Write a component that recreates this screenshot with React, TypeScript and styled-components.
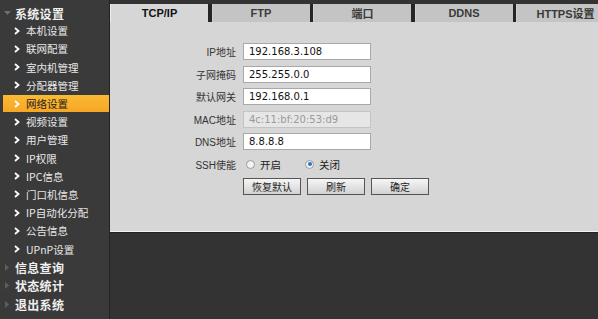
import React from 'react';
import styled, { createGlobalStyle } from 'styled-components';

const GlobalStyle = createGlobalStyle`
  html, body {
    margin: 0;
    padding: 0;
    background: #333333;
  }
  * {
    box-sizing: border-box;
  }
`;

type MenuItem = { label: string; active?: boolean };

const subItems: MenuItem[] = [
  { label: '本机设置' },
  { label: '联网配置' },
  { label: '室内机管理' },
  { label: '分配器管理' },
  { label: '网络设置', active: true },
  { label: '视频设置' },
  { label: '用户管理' },
  { label: 'IP权限' },
  { label: 'IPC信息' },
  { label: '门口机信息' },
  { label: 'IP自动化分配' },
  { label: '公告信息' },
  { label: 'UPnP设置' },
];

const otherGroups = ['信息查询', '状态统计', '退出系统'];

const tabs = ['TCP/IP', 'FTP', '端口', 'DDNS', 'HTTPS设置'];

const fields = [
  { label: 'IP地址', value: '192.168.3.108' },
  { label: '子网掩码', value: '255.255.0.0' },
  { label: '默认网关', value: '192.168.0.1' },
  { label: 'MAC地址', value: '4c:11:bf:20:53:d9', disabled: true },
  { label: 'DNS地址', value: '8.8.8.8' },
];

function Chevron() {
  return (
    <svg width="6" height="8" viewBox="0 0 6 8">
      <polyline points="1,1 4.5,4 1,7" fill="none" stroke="#ffffff" strokeWidth="1.8" />
    </svg>
  );
}

function Caret({ open }: { open?: boolean }) {
  return open ? (
    <svg width="7" height="6" viewBox="0 0 7 6">
      <polygon points="0,1 7,1 3.5,5" fill="#6e6e6e" />
    </svg>
  ) : (
    <svg width="6" height="7" viewBox="0 0 6 7">
      <polygon points="1,0 5,3.5 1,7" fill="#5e5e5e" />
    </svg>
  );
}

function App() {
  return (
    <>
      <GlobalStyle />
      <Page>
        <Sidebar>
          <GroupRow>
            <CaretBox>
              <Caret open />
            </CaretBox>
            <GroupLabel>系统设置</GroupLabel>
          </GroupRow>
          {subItems.map((item) => (
            <SubRow key={item.label} $active={item.active}>
              <ChevronBox>
                <Chevron />
              </ChevronBox>
              <SubLabel $active={item.active}>{item.label}</SubLabel>
            </SubRow>
          ))}
          {otherGroups.map((g) => (
            <GroupRow key={g}>
              <CaretBox>
                <Caret />
              </CaretBox>
              <GroupLabel>{g}</GroupLabel>
            </GroupRow>
          ))}
        </Sidebar>
        <Main>
          <TabBar>
            {tabs.map((t, i) => (
              <Tab key={t} $active={i === 0}>
                {t}
              </Tab>
            ))}
          </TabBar>
          <Panel>
            <Form>
              {fields.map((f) => (
                <React.Fragment key={f.label}>
                  <FieldLabel>{f.label}</FieldLabel>
                  <TextInput $disabled={f.disabled}>{f.value}</TextInput>
                </React.Fragment>
              ))}
              <FieldLabel>SSH使能</FieldLabel>
              <RadioGroup>
                <RadioOption $width={59}>
                  <Radio />
                  开启
                </RadioOption>
                <RadioOption $width={59}>
                  <Radio $checked />
                  关闭
                </RadioOption>
              </RadioGroup>
              <span />
              <ButtonRow>
                <Button>恢复默认</Button>
                <Button>刷新</Button>
                <Button>确定</Button>
              </ButtonRow>
            </Form>
          </Panel>
        </Main>
      </Page>
    </>
  );
}

const Page = styled.div`
  display: flex;
  width: 598px;
  height: 319px;
  overflow: hidden;
  background: #333333;
`;

const Sidebar = styled.div`
  width: 110px;
  flex-shrink: 0;
  padding: 4px 0 0 3px;
  background: #3a3a3a;
  border-right: 1px solid #232323;
  font-family: 'Noto Sans CJK SC', 'Liberation Sans', sans-serif;
`;

const GroupRow = styled.div`
  display: flex;
  align-items: center;
  height: 18.2px;
`;

const CaretBox = styled.div`
  display: flex;
  align-items: center;
  justify-content: center;
  width: 8px;
  margin-right: 4px;
`;

const GroupLabel = styled.span`
  font-size: 12px;
  font-weight: 700;
  color: #f0f0f0;
  letter-spacing: 0.3px;
`;

const SubRow = styled.div<{ $active?: boolean }>`
  display: flex;
  align-items: center;
  height: 18.2px;
  padding-bottom: 1px;
  background: ${(p) => (p.$active ? 'linear-gradient(#fbb934, #f5a623)' : 'transparent')};
  background-clip: content-box;
`;

const ChevronBox = styled.div`
  display: flex;
  align-items: center;
  width: 23px;
  padding-left: 11px;
`;

const SubLabel = styled.span<{ $active?: boolean }>`
  font-size: 10.5px;
  color: ${(p) => (p.$active ? '#222222' : '#e8e8e8')};
`;

const Main = styled.div`
  flex: 1;
  display: flex;
  flex-direction: column;
  padding-top: 4px;
  min-width: 0;
`;

const TabBar = styled.div`
  display: flex;
  gap: 3.5px;
  height: 18px;
  background: #252525;
  overflow: hidden;
`;

const Tab = styled.div<{ $active?: boolean }>`
  flex: 0 0 98px;
  display: flex;
  align-items: center;
  justify-content: center;
  background: ${(p) => (p.$active ? '#d6d6d6' : '#c4c4c4')};
  border-left: 1px solid ${(p) => (p.$active ? '#ececec' : '#cfcfcf')};
  font-family: 'Liberation Sans', 'Noto Sans CJK SC', sans-serif;
  font-size: 11px;
  font-weight: 700;
  color: ${(p) => (p.$active ? '#111111' : '#3a3a3a')};
`;

const Panel = styled.div`
  height: 210px;
  background: #d6d6d6;
  border-bottom: 1px solid #f2f2f2;
  box-shadow: 0 1px 0 #232323;
  padding-top: 21px;
`;

const Form = styled.div`
  display: grid;
  grid-template-columns: 126px 1fr;
  column-gap: 7px;
  row-gap: 5.5px;
  grid-auto-rows: 17px;
  font-family: 'Liberation Sans', 'Noto Sans CJK SC', sans-serif;
`;

const FieldLabel = styled.div`
  display: flex;
  align-items: center;
  justify-content: flex-end;
  font-size: 10px;
  color: #333333;
`;

const TextInput = styled.div<{ $disabled?: boolean }>`
  width: 128px;
  height: 17px;
  display: flex;
  align-items: center;
  padding-left: 5px;
  background: ${(p) => (p.$disabled ? '#e6e6e6' : '#ffffff')};
  border: 1px solid ${(p) => (p.$disabled ? '#c4c4c4' : '#a8a8a8')};
  font-family: 'DejaVu Sans', 'Liberation Sans', sans-serif;
  font-size: 10px;
  color: ${(p) => (p.$disabled ? '#9a9a9a' : '#111111')};
`;

const RadioGroup = styled.div`
  display: flex;
  align-items: center;
  padding-left: 3px;
`;

const RadioOption = styled.label<{ $width: number }>`
  display: flex;
  align-items: center;
  gap: 5px;
  width: ${(p) => p.$width}px;
  font-size: 10.5px;
  color: #222222;
`;

const Radio = styled.span<{ $checked?: boolean }>`
  position: relative;
  width: 9px;
  height: 9px;
  border-radius: 50%;
  border: 1px solid #9a9a9a;
  background: #f4f4f4;
  &::after {
    content: '';
    display: ${(p) => (p.$checked ? 'block' : 'none')};
    position: absolute;
    left: 1.5px;
    top: 1.5px;
    width: 4px;
    height: 4px;
    border-radius: 50%;
    background: #2a6fc9;
  }
`;

const ButtonRow = styled.div`
  display: flex;
  gap: 6px;
`;

const Button = styled.button`
  width: 58px;
  height: 17px;
  padding: 0;
  border: 1px solid #555555;
  background: linear-gradient(#f6f6f6, #d2d2d2);
  font-family: 'Noto Sans CJK SC', sans-serif;
  font-size: 10px;
  color: #222222;
  display: flex;
  align-items: center;
  justify-content: center;
`;

export default App;
